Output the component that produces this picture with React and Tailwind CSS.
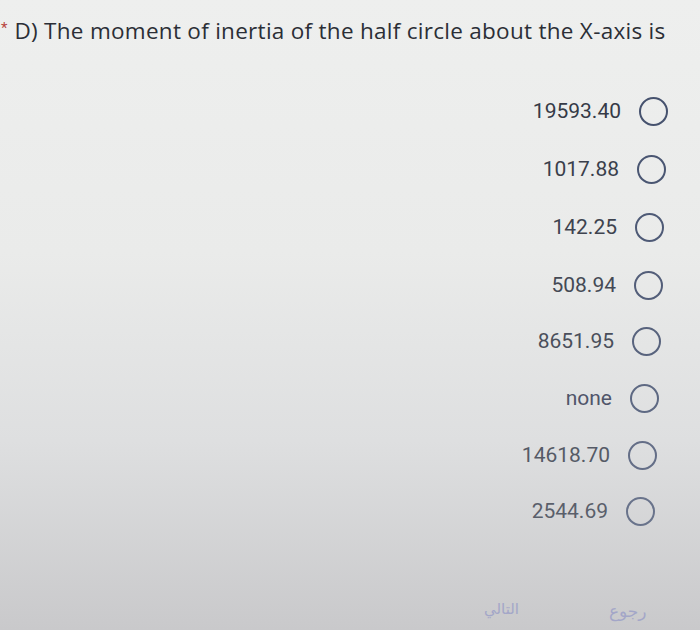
import React from "react";

const options = [
  { label: "19593.40", row: "h-[57px] pr-[32px]", text: "text-[#353a46]", ring: "border-[#46526e]" },
  { label: "1017.88", row: "h-[58px] pr-[34px]", text: "text-[#3a3f4b]", ring: "border-[#4a5672]" },
  { label: "142.25", row: "h-[59px] pr-[36px]", text: "text-[#3e434f]", ring: "border-[#4e5a76]" },
  { label: "508.94", row: "h-[56px] pr-[37px]", text: "text-[#444955]", ring: "border-[#535e79]" },
  { label: "8651.95", row: "h-[56px] pr-[39px]", text: "text-[#4a4f5b]", ring: "border-[#58637d]" },
  { label: "none", row: "h-[58px] pr-[41px]", text: "text-[#50556a]", ring: "border-[#5e6983]" },
  { label: "14618.70", row: "h-[56px] pr-[43px]", text: "text-[#555a66]", ring: "border-[#646e87]" },
  { label: "2544.69", row: "h-[57px] pr-[45px]", text: "text-[#5a5f6b]", ring: "border-[#69738b]" },
];

export default function App() {
  return (
    <div
      className="w-[700px] h-[630px] overflow-hidden flex flex-col bg-[linear-gradient(180deg,#eeefee_0%,#eaebea_40%,#dedfe0_70%,#c9c9cb_100%)]"
      style={{ fontFamily: "Roboto, 'Liberation Sans', sans-serif" }}
    >
      <div className="flex items-start pt-[15px] pl-[1px] h-[83px]">
        <span className="text-[#b84440] text-[15px] leading-none mt-[6px] mr-[7px]">*</span>
        <span
          className="text-[#2b2e36] text-[22.5px] leading-[32px] tracking-[0.28px] whitespace-nowrap"
          style={{ fontFamily: "'Open Sans', Roboto, sans-serif" }}
        >
          D) The moment of inertia of the half circle about the X-axis is
        </span>
      </div>
      <div className="flex flex-col">
        {options.map((o) => (
          <div key={o.label} className={`flex items-center justify-end gap-[18px] ${o.row}`}>
            <span className={`text-[21px] leading-none ${o.text}`}>{o.label}</span>
            <span className={`w-[29px] h-[29px] rounded-full border-[2.5px] ${o.ring}`} />
          </div>
        ))}
      </div>
      <div className="flex-1 flex items-end pb-[10px]">
        <span className="ml-[484px] text-[15px] text-[#9a9ec8] opacity-80" style={{ fontFamily: "'DejaVu Sans', sans-serif" }}>
          التالي
        </span>
        <span className="ml-[90px] mb-[-4px] text-[17px] text-[#9a9ec8] opacity-80" style={{ fontFamily: "'DejaVu Sans', sans-serif" }}>
          رجوع
        </span>
      </div>
    </div>
  );
}
